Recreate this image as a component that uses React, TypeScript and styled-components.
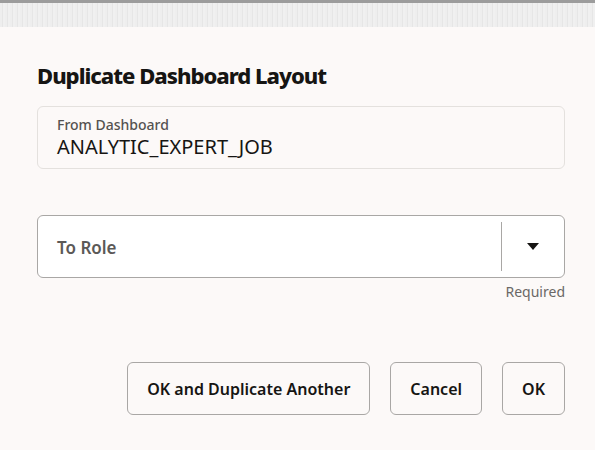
import React from 'react';
import styled, {createGlobalStyle} from "styled-components";

const GlobalStyle = createGlobalStyle`
    html, body {
        margin: 0;
        padding: 0;
        background: #fcf9f8;
    }

    body {
        font-family: "Noto Sans", "Open Sans", sans-serif;
        color: #161513;
    }
`

const buttons = [
    {label: "OK and Duplicate Another"},
    {label: "Cancel"},
    {label: "OK"},
]

export default function App() {
    return (
        <Page>
            <GlobalStyle/>
            <TopStrip/>
            <Dialog>
                <Title>Duplicate Dashboard Layout</Title>
                <ReadOnlyField>
                    <FieldLabel>From Dashboard</FieldLabel>
                    <FieldValue>ANALYTIC_EXPERT_JOB</FieldValue>
                </ReadOnlyField>
                <SelectGroup>
                    <SelectBox>
                        <Placeholder>To Role</Placeholder>
                        <Divider/>
                        <CaretButton>
                            <svg width="12" height="7" viewBox="0 0 12 7">
                                <path d="M0 0 H12 L6 7 Z" fill="#161513"/>
                            </svg>
                        </CaretButton>
                    </SelectBox>
                    <Helper>Required</Helper>
                </SelectGroup>
                <Footer>
                    {buttons.map(b => (
                        <DialogButton key={b.label}>{b.label}</DialogButton>
                    ))}
                </Footer>
            </Dialog>
        </Page>
    );
}

const Page = styled.div`
    width: 595px;
    height: 450px;
    overflow: hidden;
    background: #fcf9f8;
`

const TopStrip = styled.div`
    height: 24px;
    border-top: 3px solid #9c9c9c;
    background: repeating-linear-gradient(90deg, #eeeeee 0 2px, #e6e6e6 2px 3px, #f0f0f0 3px 5px);
`

const Dialog = styled.div`
    display: flex;
    flex-direction: column;
    padding: 0 30px 0 37px;
`

const Title = styled.h1`
    margin: 34px 0 0;
    font-size: 22px;
    line-height: 29px;
    font-weight: 800;
    letter-spacing: -1px;
    color: #161513;
`

const ReadOnlyField = styled.div`
    margin-top: 16px;
    height: 63px;
    box-sizing: border-box;
    display: flex;
    flex-direction: column;
    justify-content: center;
    padding: 0 19px;
    border: 1px solid #e4e1de;
    border-radius: 6px;
`

const FieldLabel = styled.span`
    font-size: 14px;
    line-height: 19px;
    font-weight: 500;
    color: #545250;
`

const FieldValue = styled.span`
    font-size: 20px;
    line-height: 26px;
    color: #161513;
`

const SelectGroup = styled.div`
    margin-top: 46px;
    display: flex;
    flex-direction: column;
`

const SelectBox = styled.div`
    height: 63px;
    box-sizing: border-box;
    display: flex;
    align-items: center;
    background: #ffffff;
    border: 1px solid #a9a7a5;
    border-radius: 6px;
`

const Placeholder = styled.span`
    flex: 1;
    padding: 2px 0 0 19px;
    font-size: 17px;
    font-weight: 600;
    color: #5b5957;
`

const Divider = styled.div`
    width: 1px;
    align-self: stretch;
    margin: 6px 0;
    background: #a9a7a5;
`

const CaretButton = styled.div`
    width: 62px;
    display: flex;
    justify-content: center;
    align-items: center;
`

const Helper = styled.span`
    align-self: flex-end;
    margin-top: 5px;
    font-size: 14px;
    line-height: 18px;
    color: #6a6866;
`

const Footer = styled.div`
    margin-top: 61px;
    display: flex;
    justify-content: flex-end;
    gap: 20px;
`

const DialogButton = styled.button`
    height: 53px;
    padding: 0 19px;
    background: #fcf9f8;
    border: 1px solid #a9a7a5;
    border-radius: 6px;
    font-family: "Noto Sans", "Open Sans", sans-serif;
    font-size: 16px;
    font-weight: 600;
    color: #161513;
`
